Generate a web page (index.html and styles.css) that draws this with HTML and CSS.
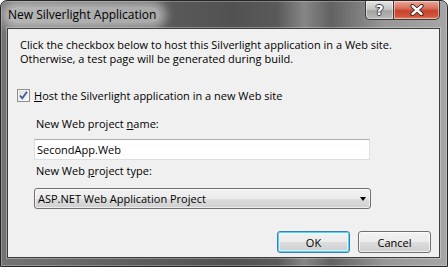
FILE: index.html
```html
<!DOCTYPE html>
<html>
<head>
    <meta charset="UTF-8">
    <title>New Silverlight Application</title>
    <link rel="stylesheet" href="styles.css">
</head>
<body>
    <div class="window">
        <div class="titlebar">
            <span class="title">New Silverlight Application</span>
            <div class="caption-buttons">
                <button class="cap-btn help-btn">?</button>
                <button class="cap-btn close-btn">
                    <svg width="14" height="12" viewBox="0 0 14 12">
                        <path d="M2.5 2 L11.5 10 M11.5 2 L2.5 10" stroke="#3a1a14" stroke-width="4.2" stroke-linecap="round"/>
                        <path d="M2.5 2 L11.5 10 M11.5 2 L2.5 10" stroke="#fff" stroke-width="2.4" stroke-linecap="round"/>
                    </svg>
                </button>
            </div>
        </div>

        <div class="client">
            <p class="intro">Click the checkbox below to host this Silverlight application in a Web site.<br>Otherwise, a test page will be generated during build.</p>

            <label class="check-row">
                <span class="checkbox">
                    <svg width="11" height="11" viewBox="0 0 11 11">
                        <path d="M2 5.5 L4.3 8.3 L9 1.8" fill="none" stroke="#3d5a9e" stroke-width="1.8"/>
                    </svg>
                </span>
                <span><u>H</u>ost the Silverlight application in a new Web site</span>
            </label>

            <div class="group">
                <div class="field-label">New Web project <u>n</u>ame:</div>
                <div class="textbox">SecondApp.Web</div>
                <div class="field-label field-label-2">New Web <u>p</u>roject type:</div>
                <div class="combo">
                    <span>ASP.NET Web Application Project</span>
                    <span class="combo-arrow"></span>
                </div>
            </div>

            <div class="actions">
                <button class="btn btn-default">OK</button>
                <button class="btn">Cancel</button>
            </div>
        </div>
    </div>
</body>
</html>
```

FILE: styles.css
```css
body {
    margin: 0;
    padding: 0;
    font-family: 'Open Sans', 'Noto Sans', sans-serif;
    font-size: 11px;
    color: #000;
    background-color: #fff;
}
.window {
    width: 448px;
    height: 267px;
    box-sizing: border-box;
    display: flex;
    flex-direction: column;
    border: 1px solid #262626;
    border-radius: 7px 7px 0 0;
    background: linear-gradient(to right, #747474 0%, #5e5e5e 30%, #515151 52%, #5a5a5a 62%, #868686 68%, #626262 74%, #979797 86%, #a6a6a6 100%);
    box-shadow: inset 0 0 0 1px rgba(255, 255, 255, 0.25);
    overflow: hidden;
}
.titlebar {
    height: 27px;
    display: flex;
    justify-content: space-between;
    align-items: flex-start;
    flex-shrink: 0;
}
.title {
    margin: 6px 0 0 7px;
    padding: 0 4px 0 0;
    font-size: 12px;
    line-height: 16px;
    color: #000;
    border-radius: 10px;
    background: rgba(235, 235, 235, 0.55);
    box-shadow: 0 0 10px 6px rgba(235, 235, 235, 0.55);
}
.caption-buttons {
    display: flex;
    margin-right: 7px;
}
.cap-btn {
    height: 19px;
    border: 1px solid #3b3b3b;
    border-top: none;
    margin: 0;
    padding: 0;
    display: flex;
    align-items: center;
    justify-content: center;
    box-shadow: inset 0 0 0 1px rgba(255, 255, 255, 0.45);
}
.help-btn {
    width: 28px;
    border-radius: 0 0 0 5px;
    border-right: none;
    background: linear-gradient(#e4e4e4 0%, #c6c6c6 45%, #a3a3a3 55%, #b9b9b9 100%);
    font-family: 'DejaVu Sans', sans-serif;
    font-weight: bold;
    font-size: 14px;
    color: #fff;
    text-shadow: 1px 0 0 #3c3c3c, -1px 0 0 #3c3c3c, 0 1px 0 #3c3c3c, 0 -1px 0 #3c3c3c;
}
.close-btn {
    width: 47px;
    border-radius: 0 0 5px 0;
    background: linear-gradient(#e9a898 0%, #d9705c 40%, #c7432c 55%, #d0553a 85%, #e48766 100%);
}
.client {
    flex: 1;
    margin: 0 7px 8px 6px;
    padding: 9px 8px 0 9px;
    background-color: #f0f0f0;
    border: 1px solid #3d3d3d;
    box-shadow: 0 0 0 1px rgba(255, 255, 255, 0.3);
    display: flex;
    flex-direction: column;
}
.intro {
    margin: 0 0 0 3px;
    line-height: 14px;
}
.check-row {
    display: flex;
    align-items: center;
    gap: 4px;
    margin-top: 23px;
    height: 13px;
    line-height: 13px;
}
.checkbox {
    width: 11px;
    height: 11px;
    border: 1px solid #8e8f8f;
    background: linear-gradient(135deg, #dcdcdc, #fbfbfb);
    box-shadow: inset 0 0 0 1px #f4f4f4;
    display: flex;
}
.group {
    padding-left: 17px;
    display: flex;
    flex-direction: column;
}
.field-label {
    margin: 14px 0 0 2px;
    line-height: 15px;
}
.field-label-2 {
    margin-top: 3px;
}
.textbox {
    width: 332px;
    height: 19px;
    margin-top: 8px;
    padding-left: 2px;
    box-sizing: content-box;
    background: #fff;
    border: 1px solid #dbdfe6;
    border-top-color: #abadb3;
    line-height: 19px;
}
.combo {
    width: 332px;
    height: 19px;
    margin-top: 10px;
    padding: 0 0 0 3px;
    border: 1px solid #707070;
    border-radius: 3px;
    background: linear-gradient(#f2f2f2 0%, #ebebeb 50%, #dddddd 50%, #cfcfcf 100%);
    box-shadow: inset 0 0 0 1px rgba(255, 255, 255, 0.6);
    display: flex;
    justify-content: space-between;
    align-items: center;
    line-height: 19px;
    box-sizing: content-box;
}
.combo-arrow {
    width: 0;
    height: 0;
    margin-right: 4px;
    border-left: 3.5px solid transparent;
    border-right: 3.5px solid transparent;
    border-top: 4px solid #000;
}
.actions {
    display: flex;
    justify-content: flex-end;
    gap: 8px;
    margin-top: 22px;
}
.btn {
    width: 73px;
    height: 22px;
    padding: 0;
    font-family: inherit;
    font-size: 11px;
    color: #000;
    border: 1px solid #707070;
    border-radius: 3px;
    background: linear-gradient(#f2f2f2 0%, #ebebeb 50%, #dddddd 50%, #cfcfcf 100%);
    box-shadow: inset 0 0 0 1px rgba(255, 255, 255, 0.7);
}
.btn-default {
    border-color: #3c7fb1;
    box-shadow: inset 0 0 0 1px #48d8fb, inset 0 0 0 2px rgba(255, 255, 255, 0.5);
}
```
